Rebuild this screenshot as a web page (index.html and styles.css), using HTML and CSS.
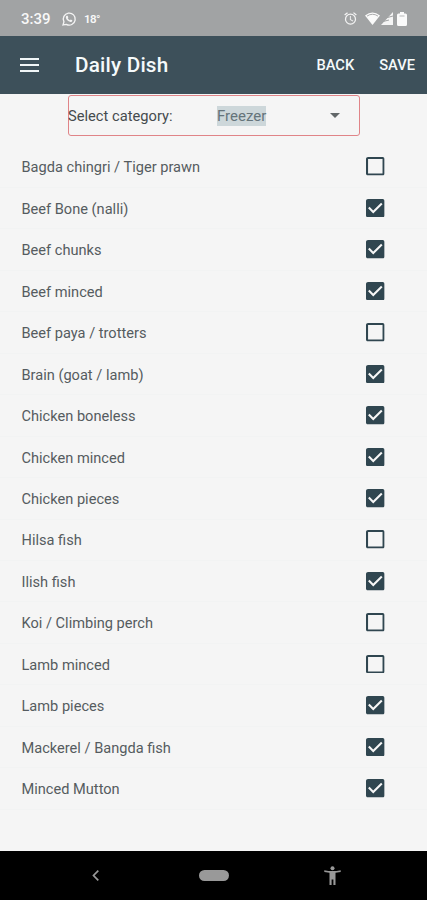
FILE: index.html
```html
<!DOCTYPE html>
<html lang="en">
<head>
<meta charset="utf-8">
<title>Daily Dish</title>
<link rel="stylesheet" href="styles.css">
</head>
<body>
<svg width="0" height="0" class="defs">
  <symbol id="off" viewBox="3 3 18 18"><path d="M19 5v14H5V5h14m0-2H5c-1.1 0-2 .9-2 2v14c0 1.1.9 2 2 2h14c1.1 0 2-.9 2-2V5c0-1.1-.9-2-2-2z"/></symbol>
  <symbol id="on" viewBox="3 3 18 18"><path d="M19 3H5c-1.110 0-2 .9-2 2v14c0 1.100.890 2 2 2h14c1.110 0 2-.9 2-2V5c0-1.100-.890-2-2-2zm-9 14l-5-5 1.410-1.410L10 14.170l7.590-7.590L19 8l-9 9z"/></symbol>
</svg>
<div class="status">
  <span class="time">3:39</span>
  <svg class="chat" viewBox="0 0 24 24"><path d="M3 21l1.400-4.700A9 9 0 1 1 8 20z" fill="none" stroke="#f4f4f4" stroke-width="2"/><path d="M8.500 7l1.500 0 1 2.500-.8 1.200c.7 1.400 1.700 2.400 3.200 3.100l1.200-1.100 2.400 1.200c0 1.800-1.300 2.800-2.700 2.600C10.500 16 7.500 13 7.200 9.500 7.100 8.400 7.700 7.300 8.500 7z" fill="#f4f4f4"/></svg>
  <span class="temp">18°</span>
  <span class="grow"></span>
  <svg class="alarm" viewBox="0 0 24 24"><path fill="#f4f4f4" d="M22 5.700l-4.600-3.900-1.300 1.500 4.600 3.900L22 5.700zM7.900 3.400L6.600 1.900 2 5.700l1.300 1.500 4.600-3.800zM12.500 8H11v6l4.700 2.900.8-1.200-4-2.400V8zM12 4a9 9 0 1 0 0 18 9 9 0 0 0 0-18zm0 16a7 7 0 1 1 0-14 7 7 0 0 1 0 14z"/></svg>
  <svg class="wifi" viewBox="0 0 15 13"><path fill="#fafafa" d="M0 3.500Q7.500-2.500 15 3.500L7.500 13z"/><path d="M2 4.100Q7.500.4 13 4.100" fill="none" stroke="#a1a3a4" stroke-width=".9"/></svg>
  <svg class="signal" viewBox="0 0 12 13"><path fill="#f5f5f5" d="M12 0v13H0z"/><path d="M1 7l11-3M0 10l8-2" stroke="#a1a3a4" stroke-width="1"/></svg>
  <svg class="battery" viewBox="0 0 10 14"><path fill="#fafafa" d="M3 0h4v1.500h1.500q1.500 0 1.500 1.500v9.500q0 1.500-1.500 1.500h-7Q0 14 0 12.500V3q0-1.500 1.500-1.500H3z"/><path d="M2.500 4h5" stroke="#b5b7b8"/></svg>
</div>
<header class="bar">
  <div class="menu"><i></i><i></i><i></i></div>
  <h1>Daily Dish</h1>
  <span class="back">BACK</span>
  <span class="save">SAVE</span>
</header>
<main>
  <div class="select">
    <span class="label">Select category:</span>
    <span class="value">Freezer</span>
    <i class="caret"></i>
  </div>
  <ul class="list">
    <li><span>Bagda chingri / Tiger prawn</span><svg><use href="#off"/></svg></li>
    <li><span>Beef Bone (nalli)</span><svg><use href="#on"/></svg></li>
    <li><span>Beef chunks</span><svg><use href="#on"/></svg></li>
    <li><span>Beef minced</span><svg><use href="#on"/></svg></li>
    <li><span>Beef paya / trotters</span><svg><use href="#off"/></svg></li>
    <li><span>Brain (goat / lamb)</span><svg><use href="#on"/></svg></li>
    <li><span>Chicken boneless</span><svg><use href="#on"/></svg></li>
    <li><span>Chicken minced</span><svg><use href="#on"/></svg></li>
    <li><span>Chicken pieces</span><svg><use href="#on"/></svg></li>
    <li><span>Hilsa fish</span><svg><use href="#off"/></svg></li>
    <li><span>Ilish fish</span><svg><use href="#on"/></svg></li>
    <li><span>Koi / Climbing perch</span><svg><use href="#off"/></svg></li>
    <li><span>Lamb minced</span><svg><use href="#off"/></svg></li>
    <li><span>Lamb pieces</span><svg><use href="#on"/></svg></li>
    <li><span>Mackerel / Bangda fish</span><svg><use href="#on"/></svg></li>
    <li><span>Minced Mutton</span><svg><use href="#on"/></svg></li>
  </ul>
</main>
<nav class="nav">
  <svg class="prev" viewBox="0 0 7 11"><path d="M6.300.7L1.500 5.500l4.800 4.800" fill="none" stroke="#999" stroke-width="1.700"/></svg>
  <i class="pill"></i>
  <svg class="person" viewBox="0 0 17 19"><circle cx="8.500" cy="2.200" r="2" fill="#999"/><path fill="#999" d="M.3 4.200Q8.500 6 16.700 4.200v1.700l-5.200.8V19H9.400v-5.500H7.600V19H5.500V6.700L.3 5.900z"/></svg>
</nav>
</body>
</html>
```

FILE: styles.css
```css
* { box-sizing: border-box; }
body {
  margin: 0;
  width: 427px;
  height: 900px;
  display: flex;
  flex-direction: column;
  overflow: hidden;
  background: #f5f5f5;
  font-family: Roboto, "Liberation Sans", sans-serif;
}
svg { display: block; flex: none; }
.defs { position: absolute; }
.status {
  height: 36px;
  flex: none;
  display: flex;
  align-items: center;
  padding: 1px 20px 0 21px;
  background: #a1a3a4;
  color: #f8f8f8;
}
.time { width: 40px; font-size: 15px; font-weight: 500; }
.chat { width: 16px; height: 16px; }
.temp { margin-left: 7px; font-size: 11.5px; font-weight: 600; letter-spacing: -0.6px; }
.grow { flex: 1; }
.alarm { width: 15px; height: 15px; margin-right: 7px; }
.wifi { width: 15px; height: 13px; margin-right: 1px; }
.signal { width: 12px; height: 13px; margin-right: 4px; }
.battery { width: 10px; height: 14px; }
.bar {
  height: 58px;
  flex: none;
  display: flex;
  align-items: center;
  padding: 0 12px 0 20px;
  background: #3d505a;
  color: #f5fafb;
}
.menu { width: 55px; display: flex; flex-direction: column; gap: 4px; }
.menu i { width: 19px; height: 2px; background: #f0f6f7; }
h1 { flex: 1; margin: 0; font-size: 20.7px; font-weight: 500; letter-spacing: 0.2px; }
.back, .save { font-size: 14.7px; font-weight: 500; }
.back { margin-right: 25px; }
main { flex: 1; min-height: 0; padding-top: 1px; }
.select {
  width: 292px;
  height: 41px;
  margin-left: 68px;
  display: flex;
  align-items: center;
  border: 1px solid #e08488;
  border-radius: 3px;
  font-size: 15px;
  color: #454b4e;
}
.label { width: 149px; margin-left: -1px; font-size: 14.7px; padding-top: 1px; }
.value { padding: 1px 0; line-height: 18px; background: #cdd7da; color: #65747a; }
.caret {
  margin-left: auto;
  margin-right: 19px;
  border: 5px solid transparent;
  border-top-color: #626769;
  border-bottom: 0;
}
.list { margin: 10.3px 0 0; padding: 0; list-style: none; }
.list li {
  height: 41.47px;
  display: flex;
  align-items: center;
  justify-content: space-between;
  padding: 0 42.4px 0 21.5px;
  border-bottom: 1px solid #f2f3f3;
  color: #555c60;
  font-size: 14.6px;
}
.list span { padding-top: 1.4px; }
.list svg { width: 18.6px; height: 18.6px; fill: #304650; }
.nav {
  height: 49px;
  flex: none;
  display: flex;
  align-items: center;
  background: #000;
}
.prev { width: 7px; height: 11px; margin-left: 92px; }
.pill { width: 30px; height: 11px; margin-left: 100px; border-radius: 6px; background: #999; }
.person { width: 17px; height: 19px; margin-left: 95px; }
```
